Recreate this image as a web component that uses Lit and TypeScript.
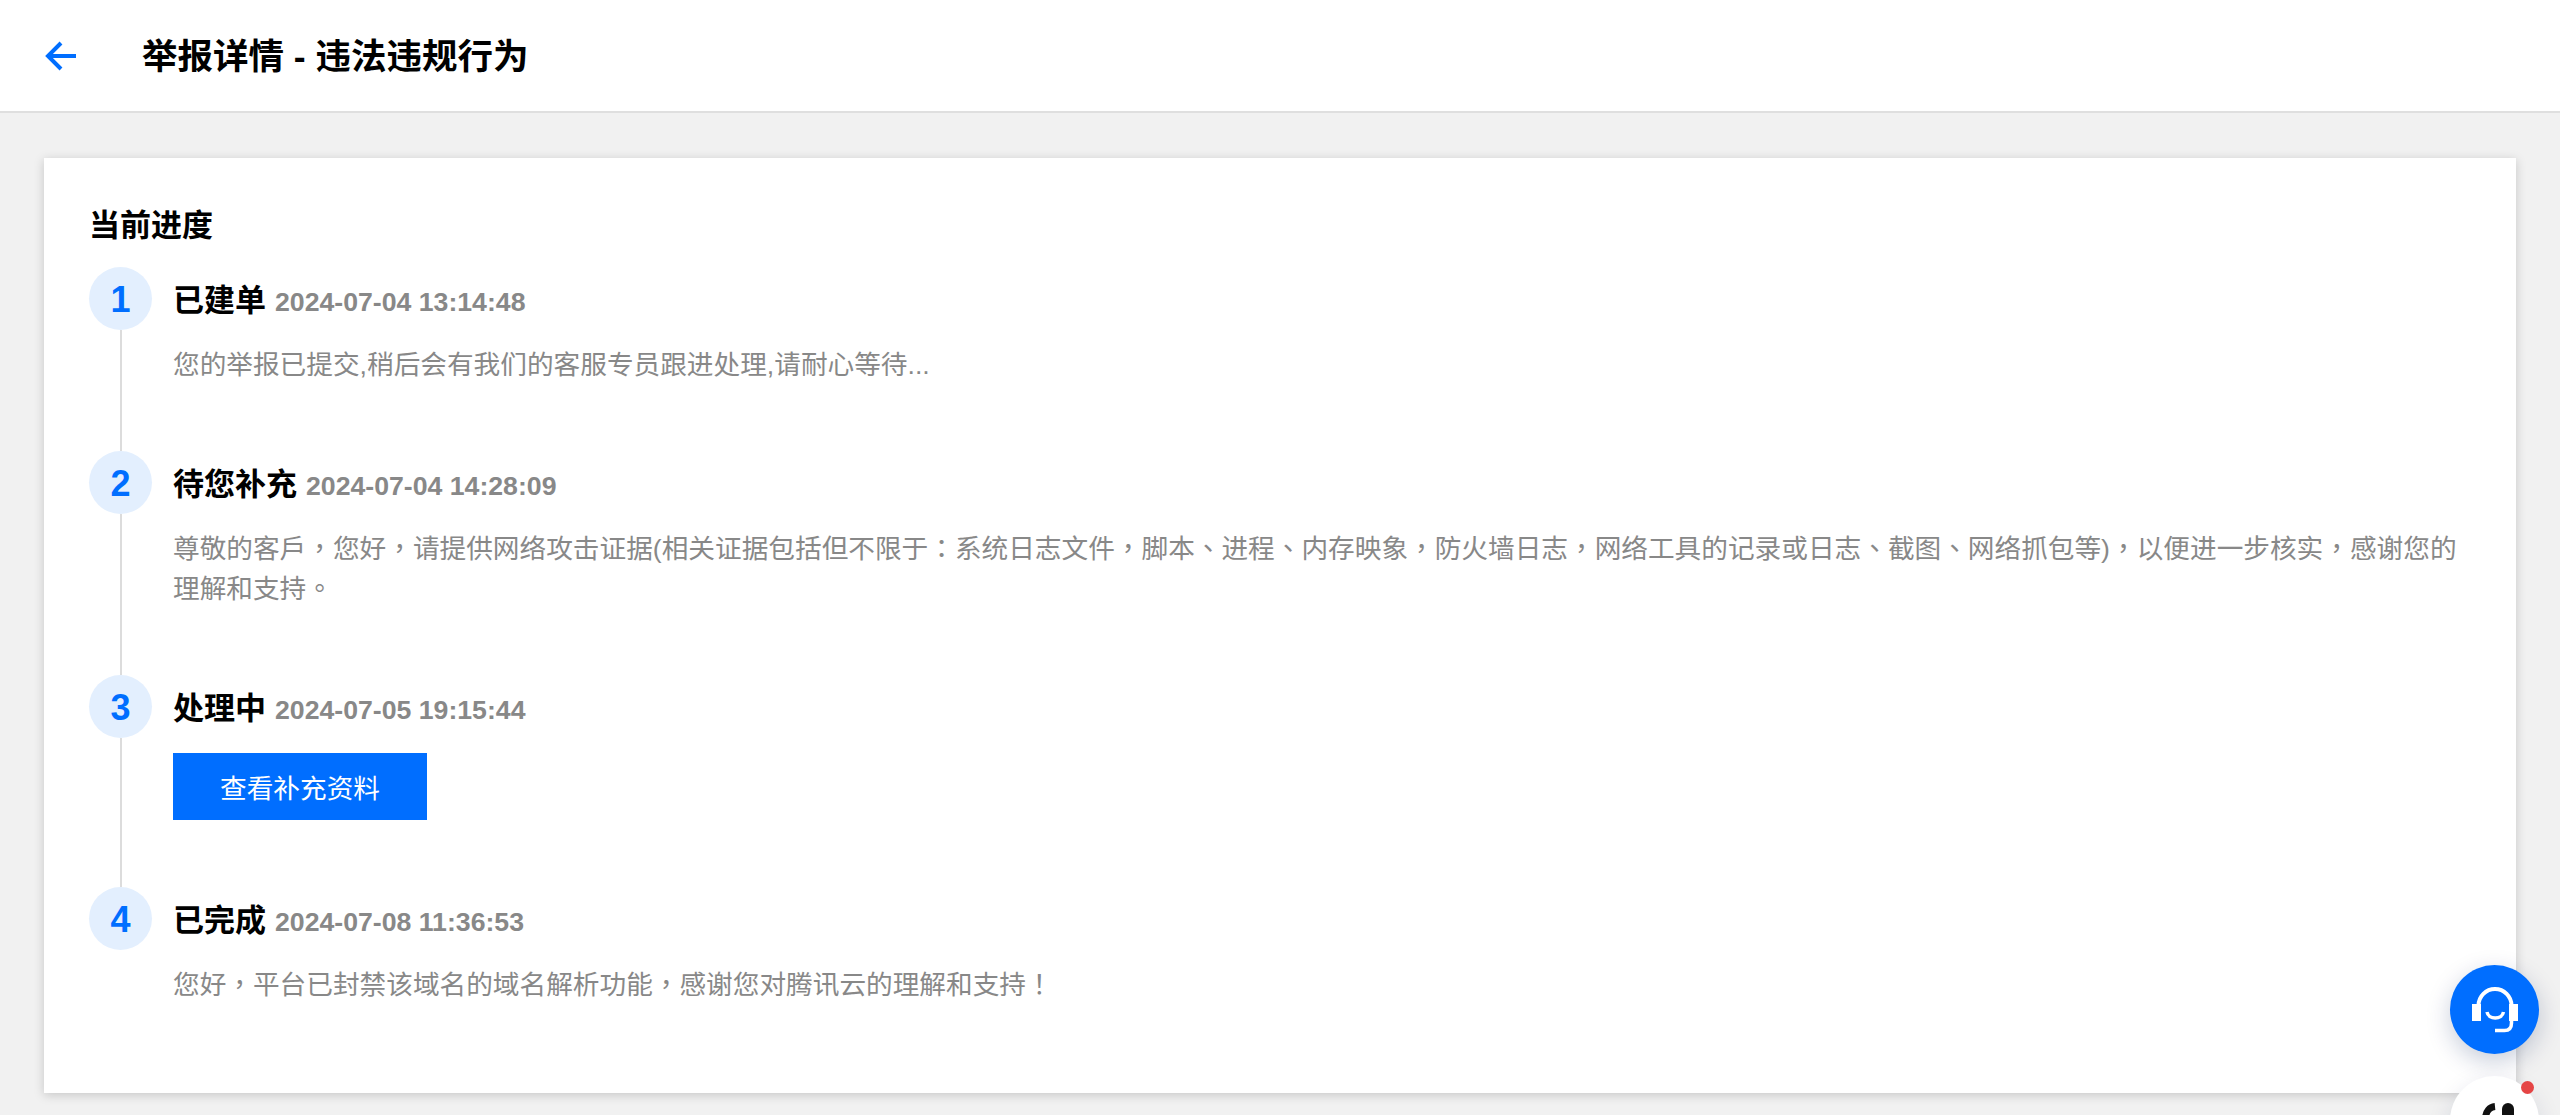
import { LitElement, html, css, svg } from "lit";
import { customElement } from "lit/decorators.js";

const steps = [
  { n: 1, title: "已建单", time: "2024-07-04 13:14:48", body: "您的举报已提交,稍后会有我们的客服专员跟进处理,请耐心等待..." },
  { n: 2, title: "待您补充", time: "2024-07-04 14:28:09", body: "尊敬的客戶，您好，请提供网络攻击证据(相关证据包括但不限于：系统日志文件，脚本、进程、内存映象，防火墙日志，网络工具的记录或日志、截图、网络抓包等)，以便进一步核实，感谢您的|理解和支持。" },
  { n: 3, title: "处理中", time: "2024-07-05 19:15:44", button: "查看补充资料" },
  { n: 4, title: "已完成", time: "2024-07-08 11:36:53", body: "您好，平台已封禁该域名的域名解析功能，感谢您对腾讯云的理解和支持！" },
];

const segments = (text: string) =>
  text
    .split(/([，：！。、]|\|)/)
    .filter((part) => part && part !== "|")
    .map((part) =>
      /^[，：！。、]$/.test(part)
        ? html`<span class="punct">${part}</span>`
        : html`<span>${part}</span>`
    );

@customElement("app-root")
export class AppRoot extends LitElement {
  static styles = css`
    :host {
      display: block;
      position: relative;
      height: 1115px;
      overflow: hidden;
      background: #f1f1f1;
      font-family: "Liberation Sans", "Noto Sans CJK SC", sans-serif;
      color: #000;
    }
    .header {
      height: 111px;
      background: #fff;
      border-bottom: 2px solid #dfdfdf;
      display: flex;
      align-items: center;
    }
    .back { margin-left: 45px; width: 31px; height: 30px; display: block; }
    .header h1 {
      margin: 2px 0 0 66px;
      font-size: 35.5px;
      font-weight: 700;
      line-height: 50px;
    }
    .main { padding: 45px 44px 0; }
    .card {
      height: 935px;
      box-sizing: border-box;
      background: #fff;
      box-shadow: 0 2px 10px rgba(0, 0, 0, 0.18);
      padding: 47px 46px 0 45px;
    }
    h2 {
      margin: 0;
      font-size: 31px;
      line-height: 42px;
      font-weight: 700;
    }
    .steps { margin-top: 20px; }
    .step {
      display: grid;
      grid-template-columns: 63px 1fr;
      column-gap: 21px;
    }
    .rail { display: flex; flex-direction: column; align-items: center; }
    .num {
      flex: none;
      width: 63px;
      height: 63px;
      border-radius: 50%;
      background: #e3effe;
      color: #006eff;
      font-size: 36px;
      font-weight: 700;
      line-height: 65px;
      text-align: center;
    }
    .line { flex: 1; width: 2px; background: #dcdcdc; }
    .content { padding-bottom: 66px; min-width: 0; }
    .head { display: flex; align-items: baseline; height: 63px; line-height: 68px; white-space: pre; }
    .title { font-size: 31px; font-weight: 700; }
    .time { margin-left: 9px; font-size: 26.67px; font-weight: 700; color: #888; }
    .body {
      margin: 15px 0 0;
      font-size: 26.67px;
      line-height: 40px;
      color: #888;
    }
    .punct { font-family: "Noto Sans CJK TC", sans-serif; line-height: 0; }
    .btn {
      display: block;
      margin: 15px 0 1px;
      width: 254px;
      height: 67px;
      border: 0;
      padding: 0;
      background: #006eff;
      color: #fff;
      font: 26.67px/72px "Liberation Sans", "Noto Sans CJK SC", sans-serif;
      text-align: center;
    }
    .fab {
      position: absolute;
      left: 2450px;
      width: 89px;
      height: 89px;
      border-radius: 50%;
      display: flex;
      align-items: center;
      justify-content: center;
    }
    .fab.blue {
      top: 965px;
      background: #006eff;
      box-shadow: 0 8px 24px rgba(0, 30, 90, 0.22);
    }
    .fab.white {
      top: 1076px;
      background: #fff;
      box-shadow: 0 8px 24px rgba(0, 30, 90, 0.12);
    }
    .dot {
      position: absolute;
      left: 71px;
      top: 5px;
      width: 13px;
      height: 13px;
      border-radius: 50%;
      background: #e54545;
    }
    .glyph { position: absolute; left: 32px; top: 27px; width: 36px; height: 40px; }
  `;

  render() {
    return html`
      <div class="header">
        <svg class="back" viewBox="0 0 31 30" fill="none" stroke="#006eff" stroke-width="4">
          <path d="M31 15H3M16 2 3 15l13 13" />
        </svg>
        <h1>举报详情 - 违法违规行为</h1>
      </div>
      <div class="main">
        <div class="card">
          <h2>当前进度</h2>
          <div class="steps">
            ${steps.map(
              (s, i) => html`
                <div class="step">
                  <div class="rail">
                    <div class="num">${s.n}</div>
                    ${i < steps.length - 1 ? html`<div class="line"></div>` : ""}
                  </div>
                  <div class="content">
                    <div class="head"><span class="title">${s.title}</span><span class="time">${s.time}</span></div>
                    ${s.body ? html`<p class="body">${segments(s.body)}</p>` : ""}
                    ${s.button ? html`<button class="btn">${s.button}</button>` : ""}
                  </div>
                </div>
              `
            )}
          </div>
        </div>
      </div>
      <div class="fab blue">
        <svg width="46" height="46" viewBox="0 0 46 46" fill="none">
          ${svg`<path d="M6.500 20v-1.500a16.500 16.500 0 0 1 33 0V20" stroke="#fff" stroke-width="4"/>
          <rect x="0" y="17" width="9" height="17" fill="#fff"/>
          <rect x="37" y="17" width="9" height="17" fill="#fff"/>
          <path d="M15 25c1.500 8 15 8 16.500 0" stroke="#fff" stroke-width="3.500"/>
          <path d="M39.500 33v3c0 5-2.500 7.500-7 7.500H23" stroke="#fff" stroke-width="3.500"/>`}
        </svg>
      </div>
      <div class="fab white">
        <span class="dot"></span>
        <svg class="glyph" viewBox="0 0 36 40" fill="none" stroke="#111" stroke-width="7">
          <path d="M3.500 30V16C3.500 8 8 4 13 3.500" />
          <path d="M26 6v30" stroke-width="12" stroke-linecap="round" />
        </svg>
      </div>
    `;
  }
}
